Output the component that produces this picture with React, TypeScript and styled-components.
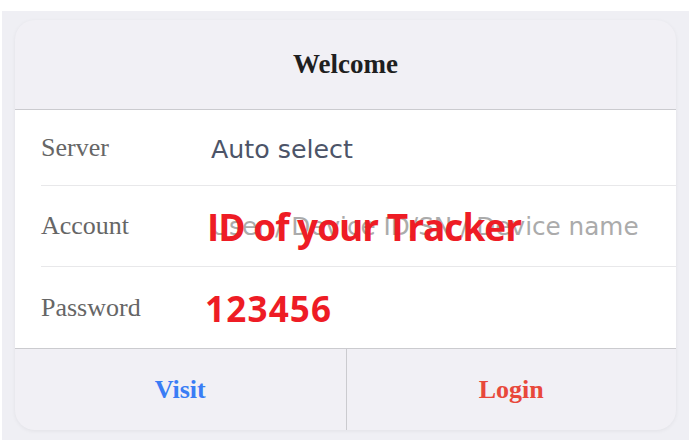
import styled, { createGlobalStyle } from "styled-components";

const GlobalStyle = createGlobalStyle`
  html, body {
    margin: 0;
    padding: 0;
    background: #fff;
  }
  * {
    box-sizing: border-box;
  }
`;

type Field = {
  label: string;
  value?: string;
  placeholder?: string;
  note?: string;
  compact?: boolean;
};

const fields: Field[] = [
  { label: "Server", value: "Auto select", compact: true },
  {
    label: "Account",
    placeholder: "User / Device ID/SN / Device name",
    note: "ID of your Tracker",
  },
  { label: "Password", note: "123456" },
];

const App = () => {
  return (
    <>
      <GlobalStyle />
      <Page>
        <Card>
          <Header>Welcome</Header>
          <Form>
            {fields.map((f) => (
              <Row key={f.label} $compact={f.compact}>
                <Label>{f.label}</Label>
                <Field>
                  {f.value ? (
                    <Value>{f.value}</Value>
                  ) : (
                    <Input placeholder={f.placeholder} readOnly />
                  )}
                  {f.note && (
                    <Note $small={f.label === "Password"}>{f.note}</Note>
                  )}
                </Field>
              </Row>
            ))}
          </Form>
          <Footer>
            <Action $color="#3a7df5">Visit</Action>
            <Action $color="#e8483b">Login</Action>
          </Footer>
        </Card>
      </Page>
    </>
  );
};

const Page = styled.div`
  margin: 11px 8px 0 2px;
  height: 429px;
  background: #efeff4;
  padding: 9px 13px 10px 13px;
`;

const Card = styled.div`
  display: flex;
  flex-direction: column;
  height: 410px;
  background: #f1f0f5;
  border-radius: 20px;
  overflow: hidden;
  box-shadow: 0 1px 4px rgba(0, 0, 0, 0.06);
`;

const Header = styled.div`
  height: 90px;
  flex-shrink: 0;
  display: flex;
  align-items: center;
  justify-content: center;
  font-family: "Liberation Serif", serif;
  font-weight: bold;
  font-size: 27px;
  color: #1f1f1f;
  border-bottom: 1px solid #cbcbcf;
`;

const Form = styled.div`
  background: #fff;
  padding-left: 26px;
  border-bottom: 1px solid #cbcbcf;
`;

const Row = styled.div<{ $compact?: boolean }>`
  display: flex;
  align-items: center;
  height: ${(p) => (p.$compact ? 76 : 81)}px;
  border-bottom: 1px solid #e8e8ea;

  &:last-child {
    border-bottom: none;
  }
`;

const Label = styled.div`
  width: 170px;
  flex-shrink: 0;
  font-family: "Liberation Serif", serif;
  font-size: 26px;
  color: #666;
`;

const Field = styled.div`
  position: relative;
  flex: 1;
  display: flex;
  align-items: center;
  height: 100%;
`;

const Value = styled.div`
  font-family: "DejaVu Sans", sans-serif;
  font-size: 25.3px;
  color: #4c5468;
  padding-top: 3px;
`;

const Input = styled.input`
  width: 100%;
  border: none;
  outline: none;
  background: transparent;
  padding: 0;
  font-family: "DejaVu Sans", sans-serif;
  font-size: 24.7px;
  color: #4c5468;

  &::placeholder {
    color: #ababab;
  }
`;

const Note = styled.div<{ $small?: boolean }>`
  position: absolute;
  left: ${(p) => (p.$small ? -6 : -4)}px;
  top: 50%;
  transform: translateY(-50%);
  font-family: "Open Sans", sans-serif;
  font-weight: bold;
  font-size: ${(p) => (p.$small ? 35 : 37)}px;
  letter-spacing: ${(p) => (p.$small ? 1.2 : -1)}px;
  color: #ee1c25;
  white-space: nowrap;
  pointer-events: none;
`;

const Footer = styled.div`
  flex: 1;
  display: grid;
  grid-template-columns: 1fr 1fr;
`;

const Action = styled.button<{ $color: string }>`
  border: none;
  background: transparent;
  font-family: "Liberation Serif", serif;
  font-weight: bold;
  font-size: 26px;
  color: ${(p) => p.$color};
  cursor: pointer;

  & + & {
    border-left: 1px solid #cbcbcf;
  }
`;

export default App;
